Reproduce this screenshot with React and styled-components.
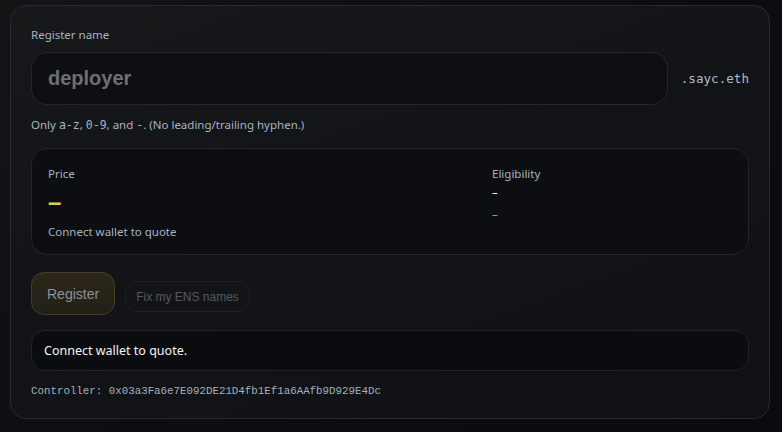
import React from 'react';
import styled, { createGlobalStyle } from 'styled-components';

const GlobalStyle = createGlobalStyle`
html, body {
    margin: 0;
    padding: 0;
    background: #0b0c0f;
}
body {
    font-family: "Noto Sans", "Open Sans", sans-serif;
    -webkit-font-smoothing: antialiased;
}
`

const Page = styled.div`
width: 782px;
height: 432px;
box-sizing: border-box;
padding: 5px 12px 0 10px;
background: linear-gradient(135deg, #131416 0%, #0c0d10 55%, #0a0b0e 100%);
`

const Card = styled.section`
box-sizing: border-box;
height: 414px;
padding: 21px 20px 20px;
border: 1px solid #2a2b2f;
border-radius: 16px;
background: linear-gradient(160deg, #17181a 0%, #121316 50%, #101114 100%);
display: flex;
flex-direction: column;
`

const Label = styled.div`
font-size: 11.5px;
line-height: 16px;
color: #a6b4c2;
`

const InputRow = styled.div`
display: flex;
align-items: center;
gap: 13px;
margin-top: 9px;
`

const NameInput = styled.div`
flex: 1;
box-sizing: border-box;
height: 53px;
display: flex;
align-items: center;
padding: 0 16px;
border: 1px solid #26272b;
border-radius: 16px;
background: #0e0f12;
font-family: "Liberation Sans", Arial, sans-serif;
font-weight: bold;
font-size: 20px;
color: #6f6f70;
`

const Suffix = styled.span`
font-family: "DejaVu Sans Mono", "Liberation Mono", monospace;
font-size: 12.6px;
color: #aebccb;
`

const Hint = styled.div`
margin-top: 12px;
font-size: 11.5px;
line-height: 16px;
color: #a6b4c2;
code {
    font-family: "DejaVu Sans Mono", "Liberation Mono", monospace;
    font-size: 11.5px;
}
`

const InfoBox = styled.div`
margin-top: 15px;
box-sizing: border-box;
height: 107px;
padding: 17px 16px 16px;
border: 1px solid #25262a;
border-radius: 16px;
background: #0d0e11;
display: grid;
grid-template-columns: 444px 1fr;
`

const Column = styled.div`
display: flex;
flex-direction: column;
`

const PriceDash = styled.div`
margin-top: 9px;
height: 22px;
font-family: "Liberation Sans", Arial, sans-serif;
font-weight: bold;
font-size: 24px;
line-height: 22px;
color: #e6c25c;
`

const SubNote = styled.div`
margin-top: 11px;
font-size: 11.5px;
line-height: 16px;
color: #a6b4c2;
`

const Dash = styled.div`
margin-top: ${({ $gap }) => $gap ? '6px' : '2px'};
font-size: 11.5px;
line-height: 16px;
color: ${({ $dim }) => $dim ? '#9aa4ae' : '#ffffff'};
`

const Actions = styled.div`
margin-top: 17px;
display: flex;
align-items: flex-start;
gap: 10px;
`

const Button = styled.button`
box-sizing: border-box;
font-family: "Liberation Sans", Arial, sans-serif;
cursor: pointer;
${({ $primary }) => $primary ? `
    height: 43px;
    padding: 0 15px;
    border: 1px solid #463d25;
    border-radius: 13px;
    background: linear-gradient(180deg, #2c271b 0%, #221f17 100%);
    color: #8c9199;
    font-size: 14px;
` : `
    margin-top: 9px;
    height: 31px;
    padding: 0 10px;
    border: 1px solid #202125;
    border-radius: 12px;
    background: #131417;
    color: #555960;
    font-size: 12px;
`}
`

const Status = styled.div`
margin-top: 15px;
box-sizing: border-box;
height: 42px;
display: flex;
align-items: center;
padding: 0 12px;
border: 1px solid #222428;
border-radius: 14px;
background: #0b0c0f;
font-size: 12.5px;
color: #f3f4f5;
`

const Controller = styled.div`
margin-top: 13px;
font-family: "Liberation Mono", "DejaVu Sans Mono", monospace;
font-size: 10.8px;
line-height: 14px;
color: #a4b1be;
`

const App = () => {
    return (
        <>
            <GlobalStyle />
            <Page>
                <Card>
                    <Label>Register name</Label>
                    <InputRow>
                        <NameInput>deployer</NameInput>
                        <Suffix>.sayc.eth</Suffix>
                    </InputRow>
                    <Hint>
                        Only <code>a-z</code>, <code>0-9</code>, and <code>-</code>. (No leading/trailing hyphen.)
                    </Hint>
                    <InfoBox>
                        <Column>
                            <Label>Price</Label>
                            <PriceDash>–</PriceDash>
                            <SubNote>Connect wallet to quote</SubNote>
                        </Column>
                        <Column>
                            <Label>Eligibility</Label>
                            <Dash>–</Dash>
                            <Dash $gap $dim>–</Dash>
                        </Column>
                    </InfoBox>
                    <Actions>
                        <Button $primary>Register</Button>
                        <Button>Fix my ENS names</Button>
                    </Actions>
                    <Status>Connect wallet to quote.</Status>
                    <Controller>Controller: 0x03a3Fa6e7E092DE21D4fb1Ef1a6AAfb9D929E4Dc</Controller>
                </Card>
            </Page>
        </>
    );
}

export default App;
